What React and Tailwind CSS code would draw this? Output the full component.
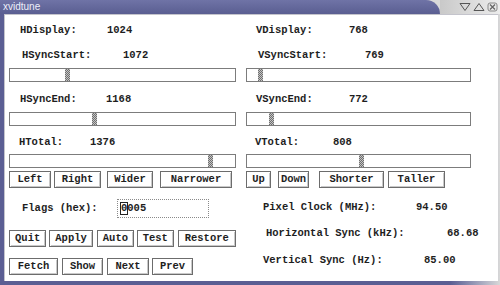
import React from "react";

const mono = "font-['Liberation_Mono',monospace] font-bold text-[10.5px] text-[#1e1e1e] leading-none";

// label offset and the width up to where the value starts
const leftRows = [
  { label: "HDisplay:", value: "1024", lc: "ml-[11px] w-[87px]", mt: "mt-[9px]" },
  { label: "HSyncStart:", value: "1072", lc: "ml-[13px] w-[101px]", mt: "mt-[12px]", thumb: 55, sbmt: "mt-[6px]" },
  { label: "HSyncEnd:", value: "1168", lc: "ml-[11px] w-[86px]", mt: "mt-[11px]", thumb: 82, sbmt: "mt-[6px]" },
  { label: "HTotal:", value: "1376", lc: "ml-[10px] w-[71px]", mt: "mt-[10px]", thumb: 198, sbmt: "mt-[5px]" },
];

const rightRows = [
  { label: "VDisplay:", value: "768", lc: "ml-[10px] w-[93px]", mt: "mt-[9px]" },
  { label: "VSyncStart:", value: "769", lc: "ml-[12px] w-[107px]", mt: "mt-[12px]", thumb: 11, sbmt: "mt-[6px]" },
  { label: "VSyncEnd:", value: "772", lc: "ml-[10px] w-[93px]", mt: "mt-[11px]", thumb: 22, sbmt: "mt-[6px]" },
  { label: "VTotal:", value: "808", lc: "ml-[9px] w-[78px]", mt: "mt-[10px]", thumb: 112, sbmt: "mt-[5px]" },
];

const readouts = [
  { label: "Pixel Clock (MHz):", value: "94.50", lc: "ml-[17px] w-[153px]", mt: "mt-[13px]" },
  { label: "Horizontal Sync (kHz):", value: "68.68", lc: "ml-[20px] w-[181px]", mt: "mt-[13px]" },
  { label: "Vertical Sync (Hz):", value: "85.00", lc: "ml-[17px] w-[161px]", mt: "mt-[14px]" },
];

function Label({ row }) {
  return (
    <div className={`${row.mt} h-[13px] flex items-center whitespace-nowrap ${mono}`}>
      <span className={`${row.lc} shrink-0`}>{row.label}</span>
      <span>{row.value}</span>
    </div>
  );
}

function Scroll({ thumb, mt }) {
  return (
    <div className={`${mt} h-[14px] border border-[#7c7c7c] bg-white flex`}>
      <div
        className="w-[5px] h-full bg-[#9a9a9a] bg-[repeating-conic-gradient(#6e6e6e_0_25%,#c4c4c4_0_50%)] bg-size-[2px_2px]"
        style={{ marginLeft: thumb }}
      />
    </div>
  );
}

function Btn({ children, w, ml }) {
  return (
    <div
      className={`h-[17px] border border-[#6c6c6c] bg-white shadow-[inset_1px_1px_0_#ffffff,inset_-1px_-1px_0_#c9c9c9] flex items-center justify-center ${mono}`}
      style={{ width: w, marginLeft: ml }}
    >
      {children}
    </div>
  );
}

function Column({ rows }) {
  return (
    <>
      {rows.map((r) => (
        <React.Fragment key={r.label}>
          <Label row={r} />
          {r.thumb !== undefined && <Scroll thumb={r.thumb} mt={r.sbmt} />}
        </React.Fragment>
      ))}
    </>
  );
}

export default function App() {
  return (
    <div className="w-[500px] h-[285px] flex flex-col bg-gradient-to-r from-[#5b5e93] from-90% to-[#d8d8d8] overflow-hidden">
      {/* title bar */}
      <div className="h-[14px] flex bg-[#d9d9d9]">
        <div className="w-[440px] h-full rounded-tr-[14px] bg-gradient-to-b from-[#6f73a6] to-[#5a5e91] flex items-center pl-[3px]">
          <span className="font-['Liberation_Sans',sans-serif] text-[10px] text-[#eef0fa] leading-none">xvidtune</span>
        </div>
        <div className="flex-1 flex items-center justify-end gap-[2px] pr-[2px] bg-gradient-to-r from-[#c9c9c9] to-[#ececec]">
          <svg width="12" height="10" viewBox="0 0 12 10">
            <path d="M1 1.5 H11 L6 8.5 Z" fill="none" stroke="#555" strokeWidth="1" />
          </svg>
          <svg width="12" height="10" viewBox="0 0 12 10">
            <path d="M1 8.5 H11 L6 1.5 Z" fill="none" stroke="#555" strokeWidth="1" />
          </svg>
          <svg width="11" height="10" viewBox="0 0 11 10">
            <rect x="1" y="1" width="9" height="8" rx="2" fill="none" stroke="#888" />
            <path d="M3 2.5 L8 7.5 M8 2.5 L3 7.5" stroke="#666" strokeWidth="1.3" />
          </svg>
        </div>
      </div>

      {/* window body */}
      <div className="flex-1 flex ml-[4px] mr-[2px] mb-[4px] bg-white border-t border-l border-[#c4c4cc]">
        {/* left column */}
        <div className="w-[227px] ml-[4px] flex flex-col">
          <Column rows={leftRows} />
          <div className="mt-[3px] flex">
            <Btn w={42} ml={0}>Left</Btn>
            <Btn w={47} ml={3}>Right</Btn>
            <Btn w={46} ml={6}>Wider</Btn>
            <Btn w={72} ml={7}>Narrower</Btn>
          </div>
          <div className="mt-[11px] h-[19px] flex items-center">
            <span className={`${mono} ml-[13px] w-[95px] shrink-0`}>Flags (hex):</span>
            <div className="w-[92px] h-[19px] border border-dotted border-[#8a8a8a] flex items-center pl-[3px]">
              <span className={`${mono} outline outline-1 outline-[#222]`}>0</span>
              <span className={mono}>005</span>
            </div>
          </div>
          <div className="mt-[12px] flex">
            <Btn w={42} ml={0}>Quit</Btn>
            <Btn w={49} ml={3}>Apply</Btn>
            <Btn w={42} ml={4}>Auto</Btn>
            <Btn w={41} ml={3}>Test</Btn>
            <Btn w={66} ml={4}>Restore</Btn>
          </div>
          <div className="mt-[11px] flex">
            <Btn w={49} ml={0}>Fetch</Btn>
            <Btn w={41} ml={4}>Show</Btn>
            <Btn w={42} ml={4}>Next</Btn>
            <Btn w={41} ml={3}>Prev</Btn>
          </div>
        </div>

        {/* right column */}
        <div className="w-[225px] ml-[10px] flex flex-col">
          <Column rows={rightRows} />
          <div className="mt-[3px] flex">
            <Btn w={25} ml={0}>Up</Btn>
            <Btn w={31} ml={7}>Down</Btn>
            <Btn w={65} ml={10}>Shorter</Btn>
            <Btn w={57} ml={4}>Taller</Btn>
          </div>
          {readouts.map((r) => (
            <Label key={r.label} row={r} />
          ))}
        </div>
      </div>
    </div>
  );
}
